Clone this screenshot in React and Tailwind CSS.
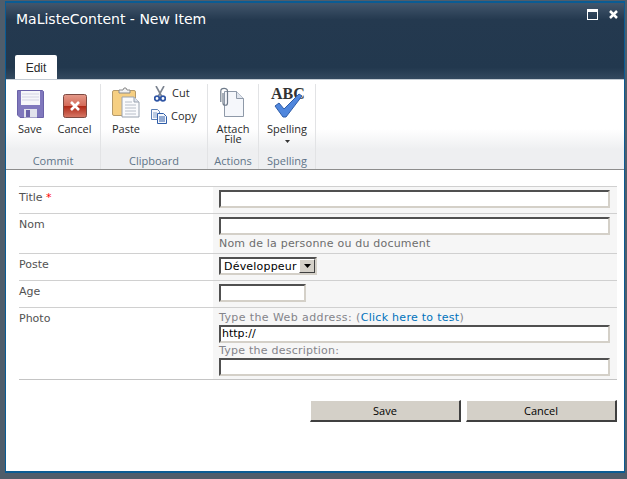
const uiFont = { fontFamily: '"DejaVu Sans", sans-serif' };
const thinFont = { fontFamily: '"Open Sans", sans-serif' };

// ribbon icons, all hand drawn
function SaveIcon() {
  return (
    <svg width="27" height="28" viewBox="0 0 27 28">
      <path d="M0.500 0.500h25l1 1v26H3l-2.500-2.500z" fill="#8078bd" stroke="#6a62a8" />
      <rect x="4" y="1" width="19" height="14" fill="#f6f6fa" />
      <path d="M5 4h17M5 7h17M5 10h17" stroke="#d4d4e4" />
      <rect x="7" y="19" width="13" height="8.500" fill="#e2e3ec" />
      <rect x="9" y="20" width="4" height="7" fill="#6a62a8" />
    </svg>
  );
}

function CancelIcon() {
  return (
    <svg width="24" height="24" viewBox="0 0 24 24">
      <defs>
        <linearGradient id="cancelBg" x1="0" y1="0" x2="0" y2="1">
          <stop offset="0" stopColor="#e49a8a" />
          <stop offset="0.5" stopColor="#d46a58" />
          <stop offset="0.52" stopColor="#b02a18" />
          <stop offset="1" stopColor="#d87a68" />
        </linearGradient>
      </defs>
      <rect x="0.500" y="0.500" width="23" height="23" rx="2" fill="url(#cancelBg)" stroke="#7d4a42" />
      <path d="M8 8l8 8M16 8l-8 8" stroke="#fff" strokeWidth="2.600" />
    </svg>
  );
}

function PasteIcon() {
  return (
    <svg width="28" height="31" viewBox="0 0 28 31">
      <rect x="0.500" y="3.500" width="23" height="25" rx="1.500" fill="#f6cf82" stroke="#b59a6a" />
      <path d="M7 5V3h4l1-2h2l1 2h3v3H7z" fill="#f2f2f2" stroke="#8a8a8a" />
      <path d="M10 10h12l5 5v15H10z" fill="#fafbfd" stroke="#9aa3b0" />
      <path d="M22 10v5h5" fill="#dfe4ec" stroke="#9aa3b0" />
      <path d="M13 15h7M13 18h11M13 21h11M13 24h11M13 27h11" stroke="#b8bec8" />
    </svg>
  );
}

function CutIcon() {
  return (
    <svg width="12" height="16" viewBox="0 0 12 16">
      <path d="M2 0l5.500 10M10 0L4.500 10" stroke="#7c8490" strokeWidth="1.600" fill="none" />
      <circle cx="3" cy="12.500" r="2.300" fill="none" stroke="#2f55a4" strokeWidth="1.800" />
      <circle cx="9" cy="12.500" r="2.300" fill="none" stroke="#2f55a4" strokeWidth="1.800" />
    </svg>
  );
}

function CopyIcon() {
  return (
    <svg width="16" height="15" viewBox="0 0 16 15">
      <path d="M0.500 0.500h6l2 2v8h-8z" fill="#f6f8fc" stroke="#5a7fb5" />
      <path d="M2 4h4M2 6h4M2 8h4" stroke="#7f9cc8" />
      <path d="M6.500 4.500h6l3 3v7h-9z" fill="#f6f8fc" stroke="#2f5da8" />
      <path d="M8 8h6M8 10h6M8 12h6" stroke="#2f5da8" />
    </svg>
  );
}

function AttachIcon() {
  return (
    <svg width="26" height="31" viewBox="0 0 26 31">
      <path d="M4.500 4.500h12l7 7v18h-19z" fill="#f5f7fb" stroke="#8e99a8" />
      <path d="M16.500 4.500v7h7" fill="#e0e5ed" stroke="#8e99a8" />
      <path d="M3 6v10c0 3 4.500 3 4.500 0V4C7.500 0.500 0.800 0.500 0.800 4v11" fill="none" stroke="#6f7b8a" strokeWidth="1.200" />
    </svg>
  );
}

function SpellIcon() {
  return (
    <div className="relative w-[32px] h-[30px]">
      <span className="absolute left-0 top-[-3px] text-[16px] leading-[18px] font-bold text-[#333]" style={{ fontFamily: '"Liberation Serif", serif' }}>
        ABC
      </span>
      <svg className="absolute left-[3px] top-[5px]" width="29" height="25" viewBox="0 0 29 25">
        <path d="M1 13l4-3 5 6L25 1l3 2-16 21h-3z" fill="#4f86dd" stroke="#2f5da8" />
      </svg>
    </div>
  );
}

function LargeButton({ icon, label, width }) {
  return (
    <div className={`flex flex-col items-center text-center ${width}`}>
      <div className="flex items-end justify-center h-[34px]">{icon}</div>
      <div className="mt-[6px] leading-[10px]">{label}</div>
    </div>
  );
}

function RibbonGroup({ title, width, children }) {
  return (
    <div className={`flex flex-col h-full border-r border-[#e2e3e5] ${width}`}>
      <div className="flex-1 flex">{children}</div>
      <div className="h-[17px] text-center text-[#5e7488] text-[11px] leading-[18px]">{title}</div>
    </div>
  );
}

function Input({ width = 'w-[391px]' }) {
  return (
    <div className={`h-[18px] bg-white border-2 border-t-[#505050] border-l-[#505050] border-b-[#d4d0c8] border-r-[#d4d0c8] ${width}`} />
  );
}

function Row({ label, required, height, children }) {
  return (
    <div className={`flex border-t border-[#d0d0d0] ${height}`}>
      <div className="w-[194px] pt-[3px] text-[#525252] text-[11px] leading-[16px]">
        {label}
        {required && <span className="text-[#ff0000]"> *</span>}
      </div>
      <div className="flex-1 bg-[#f6f6f6] pl-[6px] pt-[3px]">{children}</div>
    </div>
  );
}

function PushButton({ label }) {
  return (
    <div className="w-[151px] h-[22px] bg-[#d4d0c8] border border-t-[#ffffff] border-l-[#ffffff] border-b-2 border-r-2 border-b-[#404040] border-r-[#404040] flex items-center justify-center text-[11px] leading-[20px] pt-[1px] text-black" style={thinFont}>
      {label}
    </div>
  );
}

export default function App() {
  return (
    <div className="w-[627px] h-[479px] bg-[#4f5d6b] overflow-hidden pt-[1px] pl-[5px] pr-[2px] pb-[6px]" style={uiFont}>
      <div className="h-full flex flex-col bg-white border-2 border-l border-r border-[#0a5c94] border-t-[#0a5c94] border-b-[#0a5c94]">
        {/* title bar */}
        <div className="h-[76px] relative shrink-0 bg-[linear-gradient(#42566c_0%,#24394f_22%,#22384e_85%,#33495f_100%)]">
          <div className="pl-[10px] pt-[7px] text-white text-[14px] leading-[18px]">MaListeContent - New Item</div>
          <div className="absolute left-[9px] bottom-0 w-[42px] h-[24px] bg-white rounded-t-[2px] text-center leading-[26px] text-[#2a2a2a] text-[12px]" style={{ fontFamily: '"Liberation Sans", sans-serif' }}>
            Edit
          </div>
          <svg className="absolute right-[25px] top-[6px]" width="12" height="11" viewBox="0 0 12 11">
            <rect x="0.500" y="0.500" width="10" height="10" fill="none" stroke="#fff" />
            <rect x="1" y="1" width="9" height="2" fill="#fff" />
          </svg>
          <svg className="absolute right-[5px] top-[6px]" width="11" height="11" viewBox="0 0 11 11">
            <path d="M2 2l7 7M9 2l-7 7" stroke="#fff" strokeWidth="2.500" />
          </svg>
        </div>

        {/* ribbon */}
        <div className="h-[91px] shrink-0 flex pt-[4px] border-b border-[#8d8d8d] border-t border-t-[#c4ccd4] bg-[linear-gradient(#ffffff_0%,#ffffff_55%,#eeeff1_78%,#eeeff1_100%)] text-[11px] text-[#2a2a2a]" style={thinFont}>
          <RibbonGroup title="Commit" width="w-[95px]">
            <div className="flex">
              <LargeButton icon={<SaveIcon />} label="Save" width="w-[48px]" />
              <LargeButton icon={<CancelIcon />} label="Cancel" width="w-[41px]" />
            </div>
          </RibbonGroup>
          <RibbonGroup title="Clipboard" width="w-[107px]">
            <div className="flex">
              <LargeButton icon={<PasteIcon />} label="Paste" width="w-[50px]" />
              <div className="flex flex-col pt-[2px] gap-[8px]">
                <div className="flex items-center gap-[6px] pl-[3px] h-[15px]"><CutIcon /><span>Cut</span></div>
                <div className="flex items-center gap-[4px] h-[15px]"><CopyIcon /><span>Copy</span></div>
              </div>
            </div>
          </RibbonGroup>
          <RibbonGroup title="Actions" width="w-[51px]">
            <LargeButton icon={<AttachIcon />} label={<>Attach<br />File</>} width="w-full" />
          </RibbonGroup>
          <RibbonGroup title="Spelling" width="w-[57px]">
            <div className="w-full flex flex-col items-center">
              <LargeButton icon={<SpellIcon />} label="Spelling" width="w-full" />
              <svg className="mt-[6px]" width="5" height="3" viewBox="0 0 5 3"><path d="M0 0h5L2.500 3z" fill="#333" /></svg>
            </div>
          </RibbonGroup>
        </div>

        {/* form */}
        <div className="flex-1 pl-[13px] pr-[7px] pt-[16px]">
          <div className="border-b border-[#c4c4c4]">
            <Row label="Title" required height="h-[27px]">
              <Input />
            </Row>
            <Row label="Nom" height="h-[40px]">
              <Input />
              <div className="text-[#6d6d6d] text-[11px] leading-[16px] mt-[1px] tracking-[0.2px]">Nom de la personne ou du document</div>
            </Row>
            <Row label="Poste" height="h-[27px]">
              <div className="w-[98px] h-[18px] bg-white border-2 border-t-[#505050] border-l-[#505050] border-b-[#d4d0c8] border-r-[#d4d0c8] flex items-center justify-between text-black text-[11px] leading-[16px] pl-[3px]">
                <span className="pt-[2px] tracking-[0.2px]">Développeur</span>
                <div className="w-[16px] h-[14px] bg-[#d4d0c8] border border-t-white border-l-white border-b-[#404040] border-r-[#404040] flex items-center justify-center">
                  <svg width="7" height="4" viewBox="0 0 7 4"><path d="M0 0h7L3.500 4z" fill="#000" /></svg>
                </div>
              </div>
            </Row>
            <Row label="Age" height="h-[27px]">
              <Input width="w-[87px]" />
            </Row>
            <Row label="Photo" height="h-[72px]">
              <div className="text-[#84848a] text-[11px] leading-[14px] tracking-[0.4px]">
                Type the Web address: (<span className="text-[#0072bc] tracking-[0.28px]">Click here to test</span>)
              </div>
              <div className="w-[391px] h-[18px] bg-white border-2 border-t-[#505050] border-l-[#505050] border-b-[#d4d0c8] border-r-[#d4d0c8] text-black text-[11px] leading-[14px] pl-[1px]">
                http://
              </div>
              <div className="text-[#84848a] text-[11px] leading-[14px] mt-[1px] tracking-[0.24px]">Type the description:</div>
              <Input />
            </Row>
          </div>
          <div className="flex justify-end gap-[5px] mt-[20px]">
            <PushButton label="Save" />
            <PushButton label="Cancel" />
          </div>
        </div>
      </div>
    </div>
  );
}
